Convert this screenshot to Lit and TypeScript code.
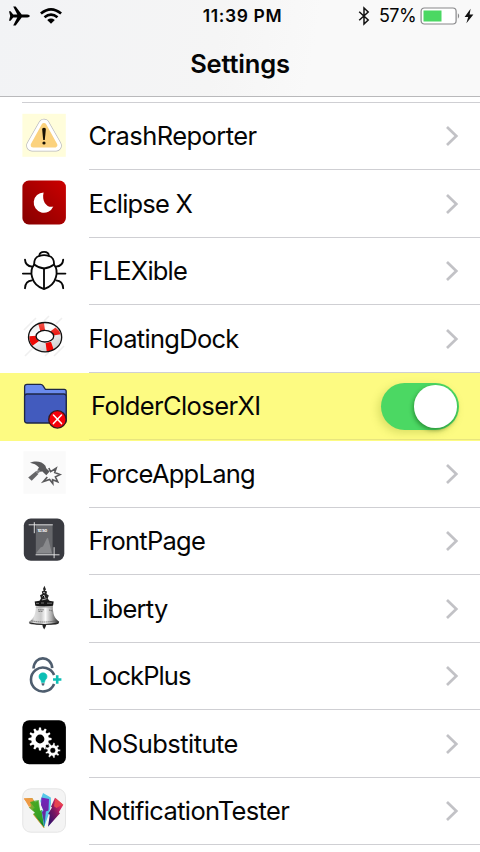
import { LitElement, html, css, svg, SVGTemplateResult } from "lit";
import { customElement } from "lit/decorators.js";
import { classMap } from "lit/directives/class-map.js";

function gear(cx: number, cy: number, outer: number, inner: number, hole: number, teeth: number) {
  const step = (Math.PI * 2) / teeth;
  const pts: string[] = [];
  for (let i = 0; i < teeth; i++) {
    const a = i * step;
    for (const [r, o] of [[inner, -0.3], [outer, -0.17], [outer, 0.17], [inner, 0.3]]) {
      pts.push(`${(cx + r * Math.cos(a + o * step)).toFixed(2)} ${(cy + r * Math.sin(a + o * step)).toFixed(2)}`);
    }
  }
  return `M${pts.join("L")}ZM${cx - hole} ${cy}a${hole} ${hole} 0 1 0 ${hole * 2} 0a${hole} ${hole} 0 1 0 ${-hole * 2} 0Z`;
}

const icons: Record<string, SVGTemplateResult> = {
  crash: svg`
    <rect x=".4" y="-.2" width="43.4" height="43" fill="#fffddb"/>
    <path d="M22 10.5L34 31.6H10Z" fill="#b8b8bd" stroke="#b8b8bd" stroke-width="11.6" stroke-linejoin="round"/>
    <path d="M22 10.5L34 31.6H10Z" fill="#fff" stroke="#fff" stroke-width="10.2" stroke-linejoin="round"/>
    <path d="M22 11.5L32.8 31H11.2Z" fill="#fbd27e" stroke="#fbd27e" stroke-width="5" stroke-linejoin="round"/>
    <path d="M20.1 14.8Q22 12.8 23.9 14.8L22.8 26H21.2Z" fill="#171003"/><circle cx="22" cy="29" r="1.6" fill="#171003"/>`,
  eclipse: svg`
    <defs><linearGradient id="er" x1="0" y1="1" x2="1" y2="0"><stop stop-color="#850000"/><stop offset="1" stop-color="#cc0000"/></linearGradient></defs>
    <rect x=".4" y="-.5" width="43.5" height="44" rx="6.5" fill="url(#er)"/>
    <path d="M21.6 11.4A10.2 10.2 0 1 0 31.3 25.6C25.5 27.3 19.3 20.8 21.6 11.4Z" fill="#fff"/>`,
  bug: svg`<g fill="none" stroke="#080808" stroke-width="1.85" stroke-linecap="round">
    <path d="M17.4 6.6C17.6 1.6 26.6 1.6 26.8 6.6"/>
    <path d="M17.5 6.8C13.6 7.5 12 11.6 12.2 15.6Q22.1 23.3 32 15.6C32.2 11.6 30.6 7.5 26.7 6.8Q22 5.5 17.5 6.8Z"/>
    <path d="M12.2 15.6C7.4 21 8.2 36 22 40.1C35.8 36 36.6 21 32 15.6M22 19.4V40"/>
    <path d="M3 10.6C3.2 14.6 5.5 17.2 10.2 17.7M41.2 10.6C41 14.6 38.7 17.2 34 17.7M.9 24.6H9M35.4 24.6H43.4M3 39.2C3.2 34.7 6 31.8 10 31.4M41.2 39.2C41 34.7 38.2 31.8 34.2 31.4"/></g>`,
  ring: svg`
    <defs><linearGradient id="rg" x1="0" y1="0" x2=".6" y2="1"><stop stop-color="#d9d9d9"/><stop offset=".4" stop-color="#fff"/><stop offset="1" stop-color="#cfcfcf"/></linearGradient>
    <linearGradient id="rr" x1="0" y1="0" x2="0" y2="1"><stop stop-color="#f4574b"/><stop offset=".5" stop-color="#e80d08"/><stop offset="1" stop-color="#f80400"/></linearGradient></defs>
    <path d="M2 14L14 2M22 5L27 0M34 8L40 2M3 40L11 32M23 40L27 36M32 40L42 30" stroke="#efefef" stroke-width="1.6"/>
    <ellipse cx="23.1" cy="21.2" rx="16.7" ry="14.8" fill="url(#rg)"/>
    <path d="M16.2 7.8L21.8 6.3L23 13.9L18.4 15.5ZM33.5 11.5Q37.3 14.2 38.7 18.3L31.2 19.5Q30.4 17.1 27.9 15.8ZM31.8 33.9L24.8 35.8L23.6 27L29 25.7ZM7.3 20.2L13.8 19.7Q14 23 17.1 25L10.5 29.8Q7 26 7.3 20.2Z" fill="url(#rr)"/>
    <ellipse cx="23.1" cy="21.2" rx="16.6" ry="14.7" fill="none" stroke="#111" stroke-width="1.3"/>
    <ellipse cx="22.9" cy="20.2" rx="8.8" ry="5.8" fill="#fff" stroke="#111" stroke-width="1.3"/>`,
  folder: svg`
    <path d="M2.6 36V2.8Q2.6.3 5 .3H18.6Q20.2.3 21 1.7L23.4 5.3H42.2Q44.2 5.3 44.2 7.3V36Z" fill="#6a8bee" stroke="#1e2745" stroke-width="1.3"/>
    <path d="M2.6 12.4Q2.6 10 5 10H41.8Q44.2 10 44.2 12.4V36.4Q44.2 39 41.6 39H5.2Q2.6 39 2.6 36.4Z" fill="#425bbe" stroke="#1e2745" stroke-width="1.3"/>
    <circle cx="35.4" cy="35.4" r="8.7" fill="#f5000a" stroke="#35191d" stroke-width="1.3"/>
    <path d="M31.4 31L39.5 39.6M39.5 31L31.4 39.6" stroke="#fff" stroke-width="1.5" stroke-linecap="round"/>`,
  hammer: svg`
    <rect x="1.5" y=".3" width="42.3" height="42.5" fill="#fafafa"/>
    <path d="M8 11.8C13 9.3 20.3 10 23.4 14.8L24.2 17.3L27.6 20.4L24.3 24.3L20.4 20.6L17.8 20.8L15.5 18.8L17 16.6C14.6 13.8 11.5 12.5 8 11.8Z" fill="#59595b"/>
    <path d="M6.2 26.6L13.6 20.4L16.4 23L9.7 29.8Z" fill="#666668"/>
    <path d="M13.4 20.8L16.8 18.4L18.6 20.2L15.7 22.7Z" fill="#828284"/>
    <path d="M26.8 17L28.6 20.6L34.2 17.2L32.7 21.6L38 23.6L33.4 25.8L35.7 30.8L30.6 28.7L30.8 32.5L27.6 28.4L21.4 30.5L25.3 26" fill="none" stroke="#59595b" stroke-width="1.6"/>`,
  front: svg`
    <rect x="1.8" y="-.4" width="40.5" height="42.2" rx="7" fill="#393a40"/>
    <rect x="13.8" y="5.8" width="16.8" height="30" fill="#66676b"/>
    <path d="M14 34.2L18.5 28.5L21 27.5L24.8 19.5L26 18.8L29.9 34.2Z" fill="#88898c"/>
    <path d="M6.7 5.8H30.8M12.3 3.2V14.2M13.6 35.8H37.5M32.1 28.2V39.2" stroke="#ededed" stroke-width=".9"/>
    <text x="15.5" y="13.2" font-size="4" font-weight="700" fill="#fff" font-family="Inter, sans-serif" textLength="9.6">10:50</text>`,
  bell: svg`
    <defs><linearGradient id="bg"><stop stop-color="#777"/><stop offset=".18" stop-color="#e0e0e0"/><stop offset=".4" stop-color="#c9c9c9"/><stop offset=".55" stop-color="#fafafa"/><stop offset=".75" stop-color="#aaa"/><stop offset="1" stop-color="#222"/></linearGradient></defs>
    <path d="M22.4-.3L24 3.4L22.8 4.5L25 5.5L24.5 8L26.8 9.4L25.7 12.4L27.5 15H17.5L19 12.3L18 9.3L20.4 8L19.8 5.5L21.8 4.5L21 3Z" fill="#242424"/>
    <path d="M20.5 10.5L22 9L23 12M21.2 6.4L23 6.8M20 14L24.6 12.7" stroke="#ddd" stroke-width=".8"/>
    <path d="M14 19.5H30.7C31 28 32 32 37.2 35.8Q36.8 38.2 33.4 38.8H11Q7.2 38.2 6.8 36C12.5 32 13.5 28 14 19.5Z" fill="url(#bg)"/>
    <path d="M12.7 15.6Q22 13.4 31.7 15.4L31 19.8Q22 21 13.3 19.7Z" fill="#161616"/>
    <path d="M14 17.4H17M19 17H22M25 17.2H30M13.8 21.2H30.9" stroke="#9a9a9a" stroke-width=".7"/>
    <path d="M16 23.8H22M16.4 25.4H21M27 24L30.5 25M9.4 34.8Q22 37.3 35 34.6" fill="none" stroke="#555" stroke-width=".7" stroke-dasharray="1.6 .5"/>
    <path d="M7.5 37Q22 40 36.4 37" fill="none" stroke="#242424" stroke-width="1.2"/>
    <path d="M20.4 39H24.2L23.5 41L22.2 43.6L20.8 41Z" fill="#222"/>`,
  lock: svg`
    <g fill="none" stroke="#4e5d6e" stroke-width="2.6"><path d="M11.5 14.5C12.2 1 29.3 1 30.2 14.2"/>
    <path d="M32.1 21A12 12 0 1 0 32.1 30"/></g>
    <path d="M21 18.8C16.4 18.8 15.8 24.3 19 26.2L19.5 28.4H22.5L23 26.2C26.2 24.3 25.6 18.8 21 18.8Z" fill="#0cbfb5" stroke="#0cbfb5" stroke-width=".6"/>
    <path d="M19.4 29.3H22.6L22 31.5H20Z" fill="#4e5d6e"/>
    <path d="M31 25.5H39.4M35.2 21.3V29.7" stroke="#0cbfb5" stroke-width="2.6"/>`,
  gears: svg`
    <rect x=".4" y="-.7" width="43.5" height="44" rx="6.8" fill="#000"/>
    <path fill-rule="evenodd" fill="#fff" d=${gear(18, 18, 11.6, 8.8, 4.4, 12)}/>
    <path fill-rule="evenodd" fill="#fff" stroke="#000" stroke-width=".4" d=${gear(30.8, 29.4, 7.6, 5.5, 2.4, 9)}/>`,
  tester: svg`
    <defs><linearGradient id="ta" x1="0" y1="0" x2=".8" y2="1"><stop stop-color="#f6902b"/><stop offset=".45" stop-color="#63af30"/><stop offset="1" stop-color="#087a36"/></linearGradient>
    <linearGradient id="tb" x1="0" y1="0" x2="0" y2="1"><stop stop-color="#7425bc"/><stop offset=".55" stop-color="#6b269f"/><stop offset="1" stop-color="#0784a3"/></linearGradient>
    <linearGradient id="tc" x1="1" y1="0" x2="0" y2="1"><stop stop-color="#f37432"/><stop offset=".25" stop-color="#d82465"/><stop offset=".55" stop-color="#771660"/><stop offset="1" stop-color="#200f72"/></linearGradient></defs>
    <rect x=".7" y="-.2" width="42.8" height="43.4" rx="8" fill="#f4f4f4" stroke="#ddd" stroke-width=".7"/>
    <path d="M1.7 9.5L10.3 9L13 13.6L15.8 12L18 22L20 21L22.2 39L11 25L13 23.8L6.8 18.5L8.5 17.5Z" fill="url(#ta)"/>
    <path d="M7.5 12.5L16.8 11L18 21.5L20 22L22 36L13.5 24.8L10.8 20L13 19Z" fill="#36a51f" opacity=".75"/>
    <path d="M2 9.5L10 9.2L12 12L8 13L9 17L7 18Z" fill="#ee9a45"/>
    <path d="M21 4L28.8 8.5L29 14.5L27.5 23L22.2 38L19.5 22L21 21L18.3 12Z" fill="#55c7e8"/>
    <path d="M19.5 8.5L27 10L26.5 21.5L23.8 22.5L22.5 38L20 23L21.5 21.5L19 16Z" fill="url(#tb)"/>
    <path d="M33 8.8L41.4 15.8L36.8 23.2L38 24.2L26 37.7L27.8 25.8L26.2 24.8L30 18.5L29 17.8Z" fill="url(#tc)"/>
    <path d="M33.4 9L40.5 15.2L34.5 19L32 17.2Z" fill="#e64450"/>
    <path d="M11.5 25.5L22.2 39" stroke="#e39b25" stroke-width=".8"/>`,
};

interface Entry { name: string; icon: string; spacing: number; on?: boolean }

const entries: Entry[] = [
  { name: "CrashReporter", icon: "crash", spacing: -0.57 },
  { name: "Eclipse X", icon: "eclipse", spacing: -0.8 },
  { name: "FLEXible", icon: "bug", spacing: -0.82 },
  { name: "FloatingDock", icon: "ring", spacing: -0.7 },
  { name: "FolderCloserXI", icon: "folder", spacing: -0.6, on: true },
  { name: "ForceAppLang", icon: "hammer", spacing: -0.74 },
  { name: "FrontPage", icon: "front", spacing: -0.75 },
  { name: "Liberty", icon: "bell", spacing: -0.75 },
  { name: "LockPlus", icon: "lock", spacing: -0.9 },
  { name: "NoSubstitute", icon: "gears", spacing: -0.55 },
  { name: "NotificationTester", icon: "tester", spacing: -0.64 },
];

@customElement("app-root")
export class AppRoot extends LitElement {
  static styles = css`
    :host { display: block; width: 480px; height: 852px; overflow: hidden; background: #fff; color: #050505; font-family: Inter, "Liberation Sans", sans-serif; }
    * { box-sizing: border-box; }
    svg { display: block; overflow: visible; flex: none; }
    .header { height: 97px; background: linear-gradient(100deg, #f2f3f5, #f5f5f5 45%, #f9f9f9 65%); border-bottom: 1px solid #b9b9bb; }
    .status { height: 31px; display: grid; grid-template-columns: 1fr auto 1fr; align-items: center; padding: 0 6px 0 8px; }
    .radios, .power { display: flex; align-items: center; }
    .radios { gap: 10px; }
    .power { justify-content: flex-end; }
    .time { font-size: 17.5px; font-weight: 600; letter-spacing: .6px; padding-left: 3px; white-space: nowrap; }
    .percent { font-size: 18px; letter-spacing: -.6px; margin: 0 5px 0 9px; }
    h1 { margin: 0; height: 64px; display: flex; align-items: center; justify-content: center; font-size: 25.5px; font-weight: 600; letter-spacing: -.2px; }
    .list { margin-top: 5px; }
    .edge { height: 1px; margin-left: 22px; margin-bottom: -.5px; background: #cfcfd3; }
    .row { height: 67.5px; display: flex; padding-left: 22px; }
    .row.on { background: #fdfb82; box-shadow: 0 1px 0 #fdfb82; }
    .icon { margin: 11px 22.5px 0 0; }
    .body { flex: 1; display: flex; align-items: center; justify-content: space-between; padding: 1px 22.5px 0 0; border-bottom: 1px solid #cfcfd3; }
    .on .body { border-color: #e8e57e; }
    .label { font-size: 25.5px; line-height: 32px; white-space: nowrap; }
    .on .label { margin-left: 2.5px; }
    .switch { width: 78px; height: 47px; border-radius: 24px; background: #4bd863; display: flex; align-items: center; justify-content: flex-end; padding-right: 2.5px; margin-right: -1.5px; box-shadow: -3px 3px 8px rgba(100, 130, 0, .22); }
    .knob { width: 42.5px; height: 42.5px; border-radius: 50%; background: #fff; box-shadow: -1px 2px 4px rgba(0, 60, 0, .45); }
  `;

  render() {
    return html`
      <div class="header">
        <div class="status">
          <div class="radios">
            <svg width="22" height="20" viewBox="0 0 22 20"><path d="M1 5.2H2.6L5.2 8.5H9.3L5.2.6H7.7L13.7 8.5H19.3Q21.8 8.8 21.8 10T19.3 11.5H13.7L7.7 19.4H5.2L9.3 11.5H5.2L2.6 14.8H1L2.2 10Z"/></svg>
            <svg width="22" height="16" viewBox="0 0 22 16"><g fill="none" stroke="#000" stroke-width="2.7"><path d="M.9 5.5Q11-2.8 21.1 5.5"/><path d="M4.5 9.3Q11 3.9 17.5 9.3"/></g><path d="M7.2 12Q11 9.1 14.8 12L11 15.8Z"/></svg>
          </div>
          <div class="time">11:39 PM</div>
          <div class="power">
            <svg width="12" height="18" viewBox="0 0 12 18"><path d="M1.2 4.7L10.2 13L6 17V1L10.2 5L1.2 13.3" fill="none" stroke="#111" stroke-width="1.5"/></svg>
            <span class="percent">57%</span>
            <svg width="53" height="18" viewBox="0 0 53 18"><rect x=".1" y="1" width="35" height="16" rx="3.2" fill="#fff" stroke="#88888a" stroke-width="1.2"/><rect x="2.5" y="3.5" width="18" height="11" fill="#4bd863"/><path d="M36.9 6.3Q39.5 9 36.9 11.7Z" fill="#88888a"/><path d="M49.6 1.8L43.6 10H47.2L45.4 16.3L52.4 7.5H48.6Z" fill="#111"/></svg>
          </div>
        </div>
        <h1>Settings</h1>
      </div>
      <div class="list">
        <div class="edge"></div>
        ${entries.map((e) => html`
          <div class=${classMap({ row: true, on: !!e.on })}>
            <svg class="icon" width="44" height="44" viewBox="0 0 44 44">${icons[e.icon]}</svg>
            <div class="body">
              <span class="label" style="letter-spacing:${e.spacing}px">${e.name}</span>
              ${e.on
                ? html`<div class="switch"><div class="knob"></div></div>`
                : html`<svg width="12" height="20" viewBox="0 0 12 20"><path d="M1 1L10.3 10L1 19" fill="none" stroke="#c2c2c6" stroke-width="2.7"/></svg>`}
            </div>
          </div>`)}
      </div>
    `;
  }
}
